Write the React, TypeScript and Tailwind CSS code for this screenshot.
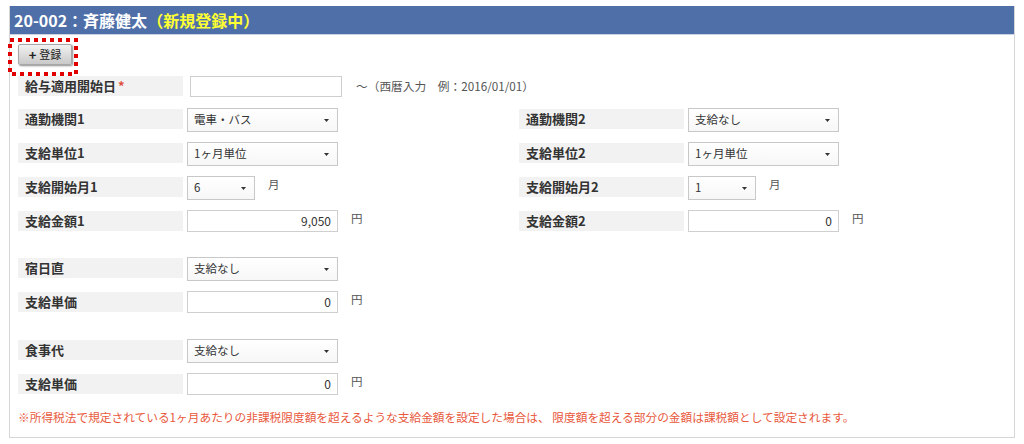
import React from "react";

const font = { fontFamily: '"Noto Sans CJK JP", "Noto Sans", sans-serif' };

function Label({ children }: { children: React.ReactNode }) {
    return (
        <div className="w-[165px] h-[20px] mt-[1px] bg-[#f2f2f2] pl-[7px] text-[13px] leading-[19px] font-bold text-[#333] shrink-0">
            {children}
        </div>
    );
}

function Select({ value, w = "w-[151px]" }: { value: string; w?: string }) {
    return (
        <div className={`${w} h-[24px] ml-[4px] border border-[#c8c8c8] bg-gradient-to-b from-white to-[#f7f7f7] flex items-center justify-between pl-[6px] pr-[8px] text-[11.5px] text-[#333] shrink-0`}>
            <span>{value}</span>
            <svg width="5" height="3" viewBox="0 0 5 3">
                <path d="M0 0h5L2.5 3z" fill="#333" />
            </svg>
        </div>
    );
}

function Amount({ value }: { value: string }) {
    return (
        <div className="w-[151px] h-[22px] ml-[4px] border border-[#cfcfcf] bg-white flex items-center justify-end pr-[6px] text-[12px] text-[#333] shrink-0">
            {value}
        </div>
    );
}

function Unit({ children }: { children: React.ReactNode }) {
    return <span className="ml-[13px] text-[11.5px] leading-[16px] text-[#555]">{children}</span>;
}

function Row({ children, className = "" }: { children: React.ReactNode; className?: string }) {
    return <div className={`flex items-start h-[24px] ${className}`}>{children}</div>;
}

export default function App() {
    return (
        <div className="w-[1024px] h-[444px] bg-white pt-[6px] pl-[9px]" style={font}>
            <div className="w-[1006px] h-[432px] border border-[#d6d6d6] border-t-0 relative">
                {/* Header */}
                <div className="h-[29px] bg-[#4f6fa8] border-b border-[#c9d2e3] pl-[4px] flex items-center text-[16px] font-bold text-white">
                    <span>20-002：斉藤健太</span>
                    <span className="text-[#ffff33]">（新規登録中）</span>
                </div>

                <div className="pl-[8px]">
                    {/* Register button */}
                    <div className="pt-[9px] h-[41px]">
                        <button className="w-[54px] h-[21px] rounded-[2px] border border-[#a8a8a8] bg-gradient-to-b from-[#f2f2f2] to-[#c9c9c9] shadow-[1px_1px_2px_rgba(0,0,0,0.45)] flex items-center justify-center gap-[3px] text-[11px] text-[#222]">
                            <span className="font-bold text-[13px] leading-none">+</span>
                            <span className="leading-none">登録</span>
                        </button>
                    </div>
                    <svg className="absolute left-[-2px] top-[32px]" width="70" height="38" viewBox="0 0 70 38">
                        <rect x="2" y="2" width="66" height="34" fill="none" stroke="#e00000" strokeWidth="4" strokeDasharray="4 4" />
                    </svg>

                    {/* Start date */}
                    <Row>
                        <div className="w-[165px] h-[20px] bg-[#f2f2f2] pl-[7px] text-[13px] leading-[19px] font-bold text-[#333] shrink-0">
                            給与適用開始日<span className="text-[#e0503c] ml-[2px]">*</span>
                        </div>
                        <div className="w-[152px] h-[21px] ml-[7px] border border-[#cfcfcf] bg-white shrink-0" />
                        <span className="ml-[14px] mt-[1px] text-[11.7px] leading-[18px] text-[#555]">〜（西暦入力　例：2016/01/01）</span>
                    </Row>

                    {/* Commute */}
                    <div className="flex mt-[8px]">
                        <div className="w-[501px] flex flex-col gap-[10px]">
                            <Row>
                                <Label>通勤機関1</Label>
                                <Select value="電車・バス" />
                            </Row>
                            <Row>
                                <Label>支給単位1</Label>
                                <Select value="1ヶ月単位" />
                            </Row>
                            <Row>
                                <Label>支給開始月1</Label>
                                <Select value="6" w="w-[68px]" />
                                <Unit>月</Unit>
                            </Row>
                            <Row>
                                <Label>支給金額1</Label>
                                <Amount value="9,050" />
                                <Unit>円</Unit>
                            </Row>
                        </div>
                        <div className="flex flex-col gap-[10px]">
                            <Row>
                                <Label>通勤機関2</Label>
                                <Select value="支給なし" />
                            </Row>
                            <Row>
                                <Label>支給単位2</Label>
                                <Select value="1ヶ月単位" />
                            </Row>
                            <Row>
                                <Label>支給開始月2</Label>
                                <Select value="1" w="w-[68px]" />
                                <Unit>月</Unit>
                            </Row>
                            <Row>
                                <Label>支給金額2</Label>
                                <Amount value="0" />
                                <Unit>円</Unit>
                            </Row>
                        </div>
                    </div>

                    {/* Night duty */}
                    <div className="flex flex-col gap-[10px] mt-[23px]">
                        <Row>
                            <Label>宿日直</Label>
                            <Select value="支給なし" />
                        </Row>
                        <Row>
                            <Label>支給単価</Label>
                            <Amount value="0" />
                            <Unit>円</Unit>
                        </Row>
                    </div>

                    {/* Meals */}
                    <div className="flex flex-col gap-[10px] mt-[24px]">
                        <Row>
                            <Label>食事代</Label>
                            <Select value="支給なし" />
                        </Row>
                        <Row>
                            <Label>支給単価</Label>
                            <Amount value="0" />
                            <Unit>円</Unit>
                        </Row>
                    </div>

                    <p className="mt-[12px] text-[11.7px] leading-[16px] text-[#e8583c] whitespace-nowrap">
                        ※所得税法で規定されている1ヶ月あたりの非課税限度額を超えるような支給金額を設定した場合は、 限度額を超える部分の金額は課税額として設定されます。
                    </p>
                </div>
            </div>
        </div>
    );
}
